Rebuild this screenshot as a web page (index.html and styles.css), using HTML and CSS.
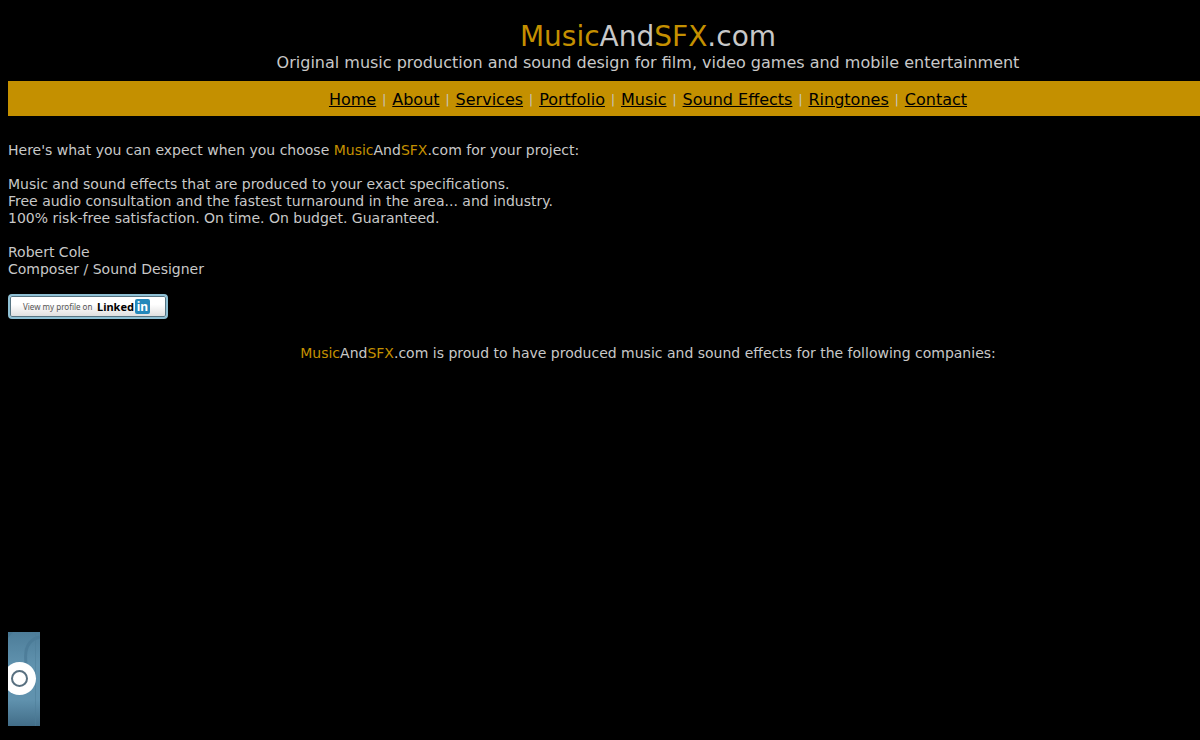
FILE: index.html
```html
<!DOCTYPE html>
<html lang="en">
<head>
<meta charset="utf-8">
<title>MusicAndSFX.com</title>
<link rel="stylesheet" href="styles.css">
</head>
<body>
<header class="masthead">
  <h1 class="title"><span class="gold">Music</span>And<span class="gold">SFX</span>.com</h1>
  <p class="tagline">Original music production and sound design for film, video games and mobile entertainment</p>
</header>
<nav class="menu">
  <a href="#">Home</a> <span>|</span>
  <a href="#">About</a> <span>|</span>
  <a href="#">Services</a> <span>|</span>
  <a href="#">Portfolio</a> <span>|</span>
  <a href="#">Music</a> <span>|</span>
  <a href="#">Sound Effects</a> <span>|</span>
  <a href="#">Ringtones</a> <span>|</span>
  <a href="#">Contact</a>
</nav>
<main class="content">
  <p>Here's what you can expect when you choose <span class="gold">Music</span>And<span class="gold">SFX</span>.com for your project:</p>
  <p>Music and sound effects that are produced to your exact specifications.<br>
  Free audio consultation and the fastest turnaround in the area... and industry.<br>
  100% risk-free satisfaction. On time. On budget. Guaranteed.</p>
  <p class="signature">Robert Cole<br>Composer / Sound Designer</p>
  <a class="badge" href="#"><span>View my profile on</span><b>Linked</b><i>in</i></a>
  <p class="clients"><span class="gold">Music</span>And<span class="gold">SFX</span>.com is proud to have produced music and sound effects for the following companies:</p>
</main>
<svg class="player" width="32" height="94" viewBox="0 0 32 94" aria-hidden="true">
  <defs>
    <linearGradient id="panel" x1="0" y1="0" x2="0" y2="1">
      <stop offset="0" stop-color="#4d7d99"/>
      <stop offset=".35" stop-color="#6092ae"/>
      <stop offset=".72" stop-color="#6092ae"/>
      <stop offset="1" stop-color="#426d88"/>
    </linearGradient>
  </defs>
  <rect width="32" height="94" fill="url(#panel)"/>
  <path d="M18 31C16 15 22 7 32 5" fill="none" stroke="#487894" stroke-width="3" opacity=".7"/>
  <path d="M0 6L5 0H0z" fill="#487894"/>
  <path d="M27.500 0V94" stroke="#4d7d98" stroke-width="1" opacity=".5"/>
  <circle cx="11.500" cy="46.500" r="16.500" fill="#fff"/>
  <circle cx="11.500" cy="46.500" r="7.500" fill="#fff" stroke="#587080" stroke-width="2"/>
</svg>
</body>
</html>
```
FILE: styles.css
```css
body {
  margin: 21px 0 0 8px;
  background: #000;
  color: #c8c8c8;
  font-family: Verdana, "DejaVu Sans", sans-serif;
  font-size: 14px;
  line-height: 17px;
}

.gold {
  color: #c49000;
}

.masthead,
.menu,
.clients {
  padding-left: 88px;
  text-align: center;
}

.title {
  margin: 0;
  font-size: 28px;
  line-height: 32px;
  font-weight: 400;
}

.tagline {
  margin: 0 0 8px;
  font-size: 16px;
  line-height: 20px;
}

.menu {
  display: flex;
  flex-wrap: wrap;
  justify-content: center;
  column-gap: 6px;
  padding-top: 9px;
  padding-bottom: 6px;
  background: #c49000;
  font-size: 16px;
  line-height: 20px;
}

.menu a {
  color: #000;
}

.menu span {
  font-size: 12px;
}

.content {
  padding-top: 26px;
}

.content p {
  margin: 0 0 17px;
}

.content .signature {
  margin-bottom: 16px;
}

.badge {
  box-sizing: border-box;
  display: flex;
  align-items: center;
  width: 160px;
  height: 25px;
  padding-left: 13px;
  border: 2px solid #8fc0d4;
  border-radius: 4px;
  box-shadow: inset 0 0 0 1px #567482;
  background: linear-gradient(#fff 40%, #ddd);
  color: #555;
  font-family: "Noto Sans", sans-serif;
  font-size: 8px;
  text-decoration: none;
}

.badge span {
  width: 73px;
  white-space: nowrap;
}

.badge b {
  margin-left: 1px;
  color: #000;
  font-size: 11px;
}

.badge i {
  width: 15px;
  margin-left: 1px;
  border-radius: 2px;
  background: #2488bb;
  color: #fff;
  font: bold 12px/15px "Noto Sans", sans-serif;
  text-align: center;
}

.content .clients {
  margin: 26px 0 0;
}

.player {
  display: block;
  margin-top: 270px;
}
```
